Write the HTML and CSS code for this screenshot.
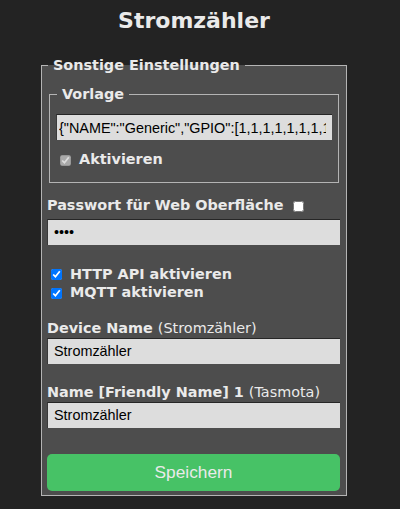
FILE: index.html
```html
<!DOCTYPE html>
<html lang="de">
<head>
<meta charset="utf-8">
<title>Stromzähler - Sonstige Einstellungen</title>
<link rel="stylesheet" href="styles.css">
</head>
<body>
<div class="page">
  <h2 class="title">Stromzähler</h2>
  <form class="form">
    <fieldset class="box">
      <legend class="legend">Sonstige Einstellungen</legend>
      <fieldset class="sub">
        <legend class="legend">Vorlage</legend>
        <input class="field tpl" type="text" value='{"NAME":"Generic","GPIO":[1,1,1,1,1,1,1,1,1,1,1,1,1,1],"FLAG":0,"BASE":18}'>
        <label class="check act"><input class="cb" type="checkbox" checked disabled> Aktivieren</label>
      </fieldset>
      <label class="lbl pw">Passwort für Web Oberfläche <input class="cb cb-pw" type="checkbox"></label>
      <input class="field" type="password" value="****">
      <label class="check first"><input class="cb" type="checkbox" checked> HTTP API aktivieren</label>
      <label class="check"><input class="cb" type="checkbox" checked> MQTT aktivieren</label>
      <label class="lbl dev">Device Name <span class="hint">(Stromzähler)</span></label>
      <input class="field" type="text" value="Stromzähler">
      <label class="lbl fn">Name [Friendly Name] 1 <span class="hint">(Tasmota)</span></label>
      <input class="field" type="text" value="Stromzähler">
      <button class="save" type="button">Speichern</button>
    </fieldset>
  </form>
</div>
</body>
</html>
```

FILE: styles.css
```css
html, body {
  margin: 0;
  padding: 0;
  background: #232323;
}
body {
  font-family: "DejaVu Sans", Verdana, sans-serif;
  font-size: 14.4px;
  color: #eaeaea;
}
.page {
  width: 306px;
  margin-left: 41px;
  padding-top: 8px;
}
.title {
  margin: 0;
  text-align: center;
  font-size: 22px;
  line-height: 26px;
  font-weight: bold;
  color: #eaeaea;
}
.form {
  margin: 23px 0 0 0;
}
.box {
  margin: 0;
  padding: 0 6px 4px 5px;
  border: 1px solid #b4b4b4;
  background: #4d4d4d;
  min-width: 0;
}
.legend {
  font-weight: bold;
  font-size: 14.4px;
  line-height: 17px;
  padding: 0 5px;
  margin-left: 1px;
  color: #eaeaea;
}
.sub {
  margin: 12px 1px 0 2px;
  padding: 0 6px 13px 6px;
  border: 1px solid #b4b4b4;
  min-width: 0;
}
.field {
  display: block;
  box-sizing: border-box;
  width: 100%;
  height: 26px;
  margin: 0;
  padding: 0 6px;
  border: 0;
  border-top: 1px solid #262626;
  border-left: 1px solid #3a3a3a;
  border-radius: 0;
  background: #dddddd;
  color: #000;
  font-family: "Liberation Sans", Arial, sans-serif;
  font-size: 14.4px;
  outline: none;
}
.tpl {
  margin-top: 11px;
  padding-left: 2px;
}
.check {
  display: block;
  font-weight: bold;
  line-height: 18px;
}
.act {
  margin-top: 11px;
  line-height: 17px;
}
.first {
  margin-top: 20px;
}
.cb {
  width: 11px;
  height: 11px;
  margin: 3px 3px 3px 4px;
  vertical-align: middle;
}
.cb-pw {
  vertical-align: -2px;
}
.lbl {
  display: block;
  font-weight: bold;
  line-height: 17px;
  margin-bottom: 1px;
}
.hint {
  font-weight: normal;
}
.pw {
  margin-top: 14px;
  margin-bottom: 4px;
}
.dev {
  margin-top: 18px;
}
.fn {
  margin-top: 20px;
}
.save {
  display: block;
  box-sizing: border-box;
  width: 100%;
  height: 37px;
  margin-top: 26px;
  border: 0;
  border-radius: 5px;
  background: #47c266;
  color: #eaeaea;
  font-family: "Liberation Sans", Arial, sans-serif;
  font-size: 17.3px;
  cursor: pointer;
}
```
